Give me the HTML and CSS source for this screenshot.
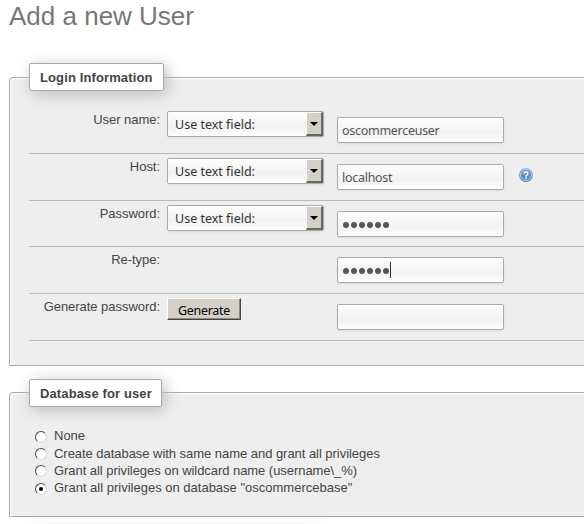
FILE: index.html
```
<!DOCTYPE html>
<html lang="en">
<head>
<meta charset="utf-8">
<title>Add a new User</title>
<link rel="stylesheet" href="styles.css">
</head>
<body>
<h1><span>Add a new User</span></h1>
<form>
<section class="panel login">
  <h2 class="legend"><span>Login Information</span></h2>
  <div class="rows">
    <div class="row">
      <label>User name:</label>
      <div class="select"><span>Use text field:</span><i class="arrow"></i></div>
      <div class="field"><span>oscommerceuser</span></div>
    </div>
    <div class="row">
      <label>Host:</label>
      <div class="select"><span>Use text field:</span><i class="arrow"></i></div>
      <div class="field"><span>localhost</span></div>
      <svg class="help" viewBox="0 0 14 14" width="14" height="14">
        <defs><linearGradient id="blue" x1="0" y1="0" x2="0" y2="1"><stop offset="0" stop-color="#91b6dc"/><stop offset="1" stop-color="#3f78b1"/></linearGradient></defs>
        <circle cx="7" cy="7" r="6.9" fill="url(#blue)"/>
        <circle cx="7" cy="7" r="5.5" fill="#5a8fc4" stroke="#c3d8ed" stroke-width=".9"/>
        <path d="M5.1 5.7C5.1 3.3 8.9 3.3 8.9 5.5C8.9 6.8 7.1 6.8 7.1 8.4M7.1 9.3V10.8" fill="none" stroke="#fff" stroke-width="1.6"/>
      </svg>
    </div>
    <div class="row short">
      <label>Password:</label>
      <div class="select"><span>Use text field:</span><i class="arrow"></i></div>
      <div class="field"><div class="dots"><b></b><b></b><b></b><b></b><b></b><b></b></div></div>
    </div>
    <div class="row">
      <label>Re-type:</label>
      <div></div>
      <div class="field"><div class="dots"><b></b><b></b><b></b><b></b><b></b><b></b></div><i class="caret"></i></div>
    </div>
    <div class="row">
      <label>Generate password:</label>
      <div class="button"><span>Generate</span></div>
      <div class="field"></div>
    </div>
  </div>
</section>
<section class="panel database">
  <h2 class="legend second"><span>Database for user</span></h2>
  <div class="options">
    <label class="option"><i class="radio"></i><span>None</span></label>
    <label class="option create"><i class="radio"></i><span>Create database with same name and grant all privileges</span></label>
    <label class="option wildcard"><i class="radio"></i><span>Grant all privileges on wildcard name (username\_%)</span></label>
    <label class="option"><i class="radio checked"></i><span>Grant all privileges on database "oscommercebase"</span></label>
  </div>
</section>
<div class="next"><div class="legend third"></div></div>
</form>
</body>
</html>
```
FILE: styles.css
```
* { box-sizing: border-box; }
body {
  margin: 0;
  height: 524px;
  overflow: hidden;
  background: #fff;
  color: #444;
  font: 13px/17px "Liberation Sans", Arial, sans-serif;
}
h1 {
  margin: 0;
  padding: 0 0 0 9px;
  height: 63px;
  font-size: 26px;
  font-weight: normal;
  line-height: 32px;
  color: #777;
}
.panel {
  display: flow-root;
  margin: 14px -10px 0 9px;
  border: 1px solid #aaa;
  border-radius: 4px 0 0 0;
  background: #eee;
  box-shadow: 1px 1px 2px #fff inset;
}
.login { height: 289px; }
.database { height: 125px; margin-top: 26px; }
.next { height: 7px; padding: 13px 0 0 29px; overflow: hidden; }
.legend {
  display: flex;
  align-items: center;
  width: 135px;
  height: 28px;
  margin: -15px 0 0 19px;
  padding-left: 10px;
  border: 1px solid #aaa;
  border-radius: 2px;
  background: #fff;
  box-shadow: 3px 3px 15px #bbb;
  font-size: 13px;
  font-weight: bold;
  letter-spacing: .12px;
  white-space: nowrap;
}
.second { width: 133px; margin-top: -14px; }
.third { width: 290px; margin: 0; }
.rows { margin: 16px 0 0 19px; }
.row {
  display: grid;
  grid-template-columns: 130px 157px 167px 14px;
  column-gap: 8px;
  align-items: start;
  height: 47px;
  border-bottom: 1px solid #bbb;
}
.row.short { height: 46px; }
.row > label {
  margin-right: -1px;
  padding-top: 4px;
  text-align: right;
  white-space: nowrap;
  letter-spacing: -.04px;
}
.select {
  display: flex;
  justify-content: space-between;
  align-items: center;
  height: 26px;
  margin-top: 4px;
  padding-left: 7px;
  border: 1px solid #aaa;
  border-radius: 2px;
  background: linear-gradient(#fff, #f1f1f1 60%, #fff);
  box-shadow: 0 1px 2px #ddd;
  font-family: "Noto Sans", sans-serif;
  font-size: 12.5px;
  letter-spacing: 0;
  color: #333;
}
.arrow {
  display: flex;
  align-items: center;
  justify-content: center;
  width: 17px;
  height: 24px;
  background: #d4d0c8;
  border: solid;
  border-width: 1px 2px 2px 1px;
  border-color: #fff #666 #666 #fff;
}
.arrow::before {
  content: "";
  border: 4px solid transparent;
  border-top-color: #000;
  border-bottom: 0;
}
.field {
  display: flex;
  align-items: center;
  width: 167px;
  height: 26px;
  margin: 10px 0 0 5px;
  padding-left: 4px;
  border: 1px solid #aaa;
  border-radius: 2px;
  background: linear-gradient(#fff, #f1f1f1 60%, #fff);
  box-shadow: 0 1px 2px #ddd;
  font-family: "Noto Sans", sans-serif;
  font-size: 12.5px;
  letter-spacing: -.28px;
  color: #555;
}
.dots { display: flex; gap: 2px; padding: 2px 0 0 1px; }
.dots b { width: 6px; height: 6px; border-radius: 50%; background: #555; }
.caret { width: 1px; height: 16px; margin-left: 1px; background: #333; }
.help { margin: 14px 0 0 12px; }
.button {
  display: flex;
  align-items: center;
  justify-content: center;
  width: 74px;
  height: 22px;
  margin-top: 4px;
  padding-top: 2px;
  background: #d4d0c8;
  border: solid;
  border-width: 1px;
  border-color: #fff #444 #444 #fff;
  box-shadow: inset -1px -1px #888;
  color: #000;
  font-family: "Noto Sans", sans-serif;
  font-size: 12.5px;
  letter-spacing: -.3px;
}
.options { margin: 20px 0 0 25px; }
.option { display: flex; align-items: center; height: 17.4px; white-space: nowrap; }
.create { letter-spacing: -.04px; }
.wildcard { letter-spacing: -.05px; }
.radio {
  display: flex;
  align-items: center;
  justify-content: center;
  width: 12px;
  height: 12px;
  margin: 2px 7px 0 0;
  border: 1.5px solid;
  border-color: #444 #ddd9d2 #ddd9d2 #444;
  border-radius: 50%;
  background: #fff;
}
.checked::before { content: ""; width: 4px; height: 4px; border-radius: 50%; background: #000; }
```
